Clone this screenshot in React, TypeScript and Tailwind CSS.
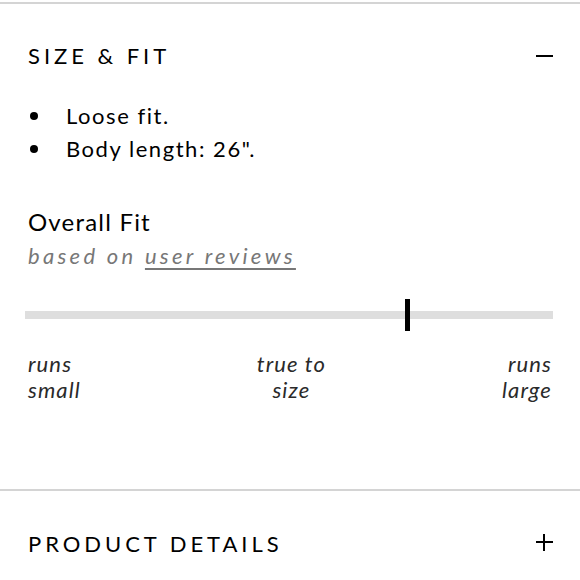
import React from "react";

const font = { fontFamily: "Lato, 'Noto Sans', sans-serif" };

const details = ["Loose fit.", 'Body length: 26".'];

export default function App() {
  const fit = 0.72;
  return (
    <div className="h-[580px] w-[580px] overflow-hidden bg-white text-black" style={font}>
      <div className="mt-[2px] border-t-2 border-[#d4d4d4]" />

      <section className="px-[28px]">
        <div className="flex h-[106px] items-center justify-between pb-[4px]">
          <h2 className="text-[22px] uppercase tracking-[0.18em]">Size &amp; Fit</h2>
          <span className="mr-[-1px] mt-[1px] block h-[2px] w-[17px] bg-black" />
        </div>

        <ul className="mt-[-11px]">
          {details.map((d) => (
            <li key={d} className="flex h-[33px] items-center text-[22px] tracking-[0.07em]">
              <span className="ml-[2px] mr-[28px] block h-[8px] w-[8px] rounded-full bg-black" />
              {d}
            </li>
          ))}
        </ul>

        <h3 className="mt-[42px] text-[24px] leading-[30px] tracking-[0.05em]">Overall Fit</h3>
        <p className="mt-[4px] text-[22px] italic leading-[30px] tracking-[0.15em] text-[#777]">
          based on <span className="underline underline-offset-4">user reviews</span>
        </p>

        <div className="relative mt-[28px] ml-[-3px] mr-[-1px] h-[32px]">
          <div className="absolute inset-x-0 top-[12px] h-[8px] bg-[#dedede]" />
          <div
            className="absolute top-0 h-[32px] w-[5px] bg-black"
            style={{ left: `${fit * 100}%` }}
          />
        </div>

        <div className="mt-[20px] flex justify-between text-[22px] italic leading-[26px] tracking-[0.05em] text-[#2a2a2a]">
          <span>runs<br />small</span>
          <span className="text-center">true to<br />size</span>
          <span className="text-right">runs<br />large</span>
        </div>
      </section>

      <div className="mt-[86px] border-t-2 border-[#d4d4d4]" />

      <section className="flex h-[108px] items-center justify-between px-[28px] pb-[4px]">
        <h2 className="text-[22px] uppercase tracking-[0.18em]">Product Details</h2>
        <span className="relative mr-[-1px] mb-[2px] block h-[17px] w-[17px]">
          <span className="absolute left-0 top-[7px] h-[2px] w-[17px] bg-black" />
          <span className="absolute left-[7px] top-0 h-[17px] w-[2px] bg-black" />
        </span>
      </section>
    </div>
  );
}
